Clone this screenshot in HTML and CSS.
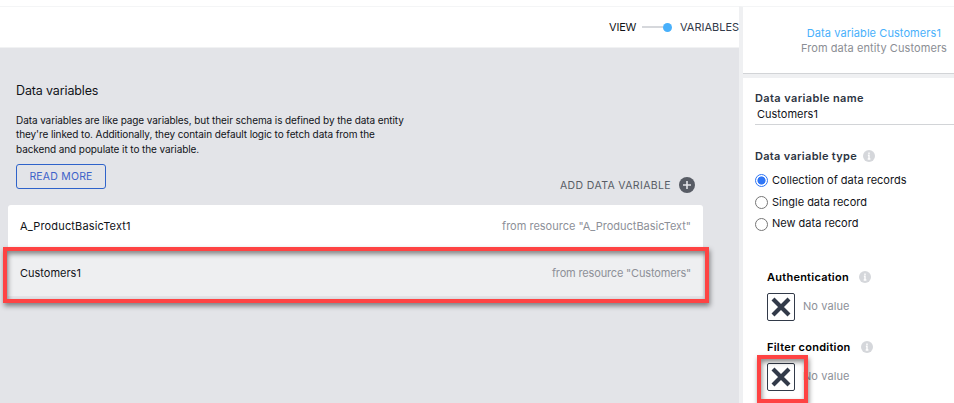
FILE: index.html
```html
<!DOCTYPE html>
<html lang="en">
<head>
<meta charset="utf-8">
<title>Data variables</title>
<link rel="stylesheet" href="styles.css">
</head>
<body>
<div class="app">
  <main class="main">
    <header class="topbar">
      <span class="mode mode-view">VIEW</span>
      <span class="switch"><span class="track"></span><span class="knob"></span></span>
      <span class="mode mode-vars">VARIABLES</span>
    </header>
    <section class="content">
      <h1 class="title">Data variables</h1>
      <p class="intro">Data variables are like page variables, but their schema is defined by the data entity<br>they're linked to. Additionally, they contain default logic to fetch data from the<br>backend and populate it to the variable.</p>
      <div class="actions">
        <button class="more"><span>READ MORE</span></button>
        <div class="add"><span class="add-label">ADD DATA VARIABLE</span>
          <svg class="plus" viewBox="0 0 16 16"><circle cx="8" cy="8" r="8" fill="#585c65"/><path d="M8 4v8M4 8h8" stroke="#e3e4e8" stroke-width="1.6"/></svg>
        </div>
      </div>
      <div class="list">
        <div class="item"><span class="item-name name-a">A_ProductBasicText1</span><span class="source source-a">from resource "A_ProductBasicText"</span></div>
        <div class="item selected"><span class="item-name name-b">Customers1</span><span class="source source-b">from resource "Customers"</span><span class="mark mark-row"></span></div>
      </div>
    </section>
  </main>
  <aside class="side">
    <header class="side-head">
      <div class="side-title">Data variable Customers1</div>
      <div class="side-sub">From data entity Customers</div>
    </header>
    <section class="form">
      <div class="label label-name"><span>Data variable name</span></div>
      <div class="field"><span>Customers1</span></div>
      <div class="label label-type"><span>Data variable type</span><svg class="info" viewBox="0 0 12 12"><circle cx="6" cy="6" r="6" fill="#d5d7db"/><path d="M6 2.4v1.5M4.9 5.3H6v3.9M4.7 9h2.7" fill="none" stroke="#fff" stroke-width="1.4"/></svg></div>
      <div class="radio checked"><i></i><span>Collection of data records</span></div>
      <div class="radio"><i></i><span>Single data record</span></div>
      <div class="radio"><i></i><span>New data record</span></div>
      <div class="param">
        <div class="param-label"><span>Authentication</span><svg class="info" viewBox="0 0 12 12"><circle cx="6" cy="6" r="6" fill="#d5d7db"/><path d="M6 2.4v1.5M4.9 5.3H6v3.9M4.7 9h2.7" fill="none" stroke="#fff" stroke-width="1.4"/></svg></div>
        <div class="value"><span class="box"><svg viewBox="0 0 26 26"><path d="M5 5l16 16M21 5L5 21" stroke="#323a49" stroke-width="4.2"/></svg></span><span class="none">No value</span></div>
      </div>
      <div class="param">
        <div class="param-label"><span>Filter condition</span><svg class="info" viewBox="0 0 12 12"><circle cx="6" cy="6" r="6" fill="#d5d7db"/><path d="M6 2.4v1.5M4.9 5.3H6v3.9M4.7 9h2.7" fill="none" stroke="#fff" stroke-width="1.4"/></svg></div>
        <div class="value"><span class="box"><svg viewBox="0 0 26 26"><path d="M5 5l16 16M21 5L5 21" stroke="#323a49" stroke-width="4.2"/></svg><span class="mark mark-box"></span></span><span class="none">No value</span></div>
      </div>
    </section>
  </aside>
</div>
</body>
</html>
```
FILE: styles.css
```css
* { box-sizing: border-box; }
body { margin: 0; background: #fff; font-family: Inter, "Open Sans", sans-serif; font-size: 11px; color: #111318; }
.app { display: flex; width: 954px; height: 403px; padding-top: 6px; overflow: hidden; white-space: nowrap; }
.main { width: 739px; overflow: hidden; border-top: 1px solid #f4f5f6; }
.topbar { height: 41px; display: flex; align-items: center; padding-left: 609px; border-bottom: 1px solid #f1f2f3; font-size: 11px; }
.mode { line-height: 14px; }
.mode-view { width: 27px; letter-spacing: -.2px; }
.switch { display: flex; align-items: center; margin-left: 6px; width: 30px; }
.track { width: 21px; height: 2px; background: #d6d8dc; }
.knob { width: 9px; height: 9px; border-radius: 50%; background: #48b0fb; }
.mode-vars { margin-left: 8px; color: #323a49; }
.content { height: 356px; background: #e3e4e8; padding: 35px 0 0 8px; }
.title { margin: 0 0 0 8px; font-size: 12.5px; line-height: 16px; font-weight: 400; letter-spacing: -.14px; }
.intro { margin: 13.5px 0 0 8px; font-size: 10px; line-height: 14.5px; letter-spacing: -.09px; }
.actions { display: flex; justify-content: space-between; width: 679px; margin: 8px 0 0 8px; height: 41px; }
.more { width: 90px; height: 25px; padding: 0; border: 1px solid #2f63ca; border-radius: 3px; background: none; color: #3c62c9; font: 10.5px/23px Inter, sans-serif; letter-spacing: .2px; }
.add { display: flex; align-items: center; height: 16px; margin-top: 13px; color: #585c65; font-size: 10.5px; width: 135px; justify-content: space-between; }
.add-label { letter-spacing: .37px; }
.plus { width: 16px; height: 16px; }
.list { width: 695px; border-radius: 3px 3px 0 0; background: #fff; }
.item { position: relative; display: flex; justify-content: space-between; align-items: flex-start; height: 44px; padding: 13px 12px 0; line-height: 16px; }
.name-a { letter-spacing: .16px; }
.selected { height: 47px; padding-top: 16px; background: #eeeff1; }
.source { color: #8d9098; }
.source-b { letter-spacing: -.16px; }
.mark { position: absolute; border: 4px solid #fe4343; box-shadow: 1px 3px 5px rgba(0,0,0,.45), inset 1px 3px 5px rgba(0,0,0,.45); }
.mark-row { left: -5px; top: -2px; width: 706px; height: 56px; }
.side { width: 215px; border-left: 4px solid #eff0f2; border-top: 1px solid #f4f5f6; overflow: hidden; }
.side-head { height: 67px; border-bottom: 1px solid #d2d4d7; padding: 19px 7px 0 0; line-height: 15px; color: #8b8e94; text-align: right; letter-spacing: .08px; }
.side-title { color: #48b0fb; padding-right: 6px; }
.form { border-top: 4px solid #eff0f2; height: 330px; padding-left: 12px; }
.label { display: flex; align-items: center; height: 16px; font-weight: 600; color: #2c3442; margin-top: 12px; letter-spacing: .38px; }
.info { width: 12px; height: 12px; margin-left: 6px; }
.field { height: 19px; line-height: 16px; padding-left: 2px; border-bottom: 1px solid #d2d4d7; }
.label-type { margin-top: 23px; margin-bottom: 6px; letter-spacing: .3px; }
.radio { display: flex; align-items: center; height: 21.7px; }
.radio span { padding-bottom: 2px; }
.radio i { width: 13px; height: 13px; border: 1px solid #767676; border-radius: 50%; margin-right: 4px; }
.radio.checked i { border-color: #2f76f6; background: radial-gradient(#2f76f6 0 3.7px, #fff 4.4px); }
.param { margin-left: 12px; height: 70px; }
.radio + .param { margin-top: 34px; }
.param-label { display: flex; align-items: center; height: 16px; font-weight: 600; color: #000; letter-spacing: .25px; }
.param-label .info { margin-left: 10px; }
.value { display: flex; align-items: center; margin-top: 8px; }
.box { position: relative; width: 28px; height: 28px; border: 1px solid #323a49; border-radius: 2px; }
.box svg { display: block; width: 26px; height: 26px; }
.none { color: #8d9098; margin-left: 8px; padding-bottom: 2px; letter-spacing: .08px; }
.mark-box { left: -11px; top: -9px; width: 51px; height: 48px; }
```
